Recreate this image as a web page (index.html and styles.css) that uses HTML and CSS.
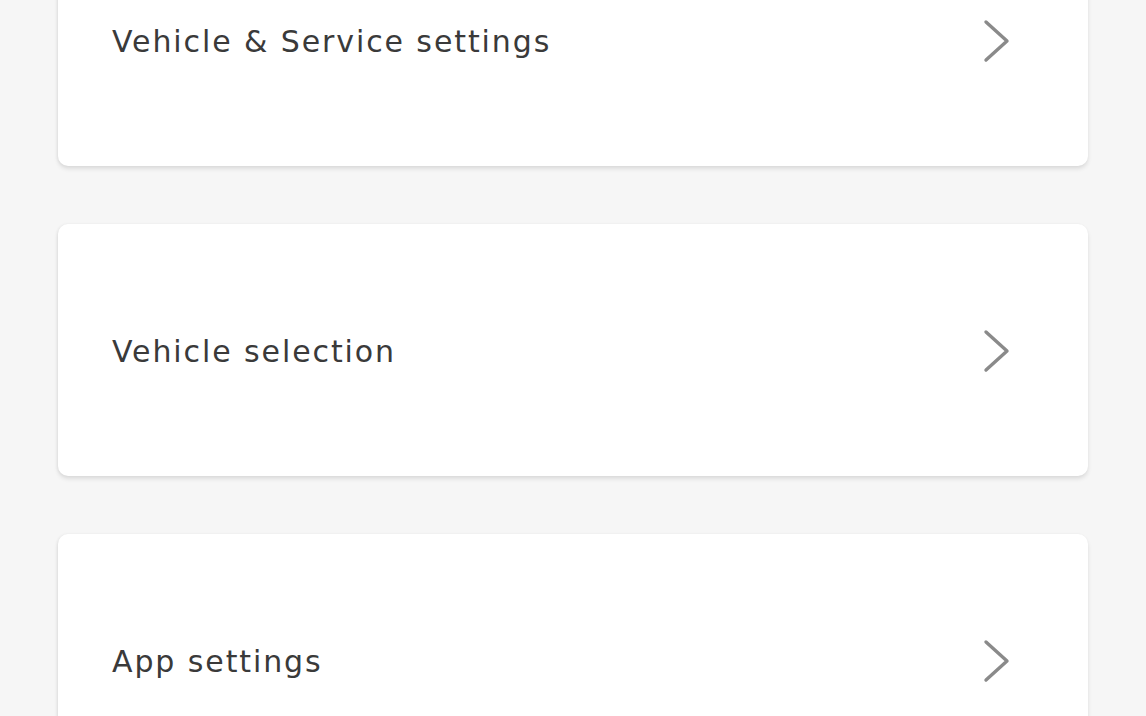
FILE: index.html
```html
<!DOCTYPE html>
<html>
<head>
<meta charset="utf-8">
<link rel="stylesheet" href="styles.css">
</head>
<body>
<div class="list">
  <div class="card">
    <span class="label">Vehicle &amp; Service settings</span>
    <svg class="chev" viewBox="0 0 30 46" width="30" height="46"><polyline points="5,4 26,23 5,42" fill="none" stroke="#8a8a8a" stroke-width="3.4" stroke-linecap="round" stroke-linejoin="round"/></svg>
  </div>
  <div class="card">
    <span class="label">Vehicle selection</span>
    <svg class="chev" viewBox="0 0 30 46" width="30" height="46"><polyline points="5,4 26,23 5,42" fill="none" stroke="#8a8a8a" stroke-width="3.4" stroke-linecap="round" stroke-linejoin="round"/></svg>
  </div>
  <div class="card">
    <span class="label">App settings</span>
    <svg class="chev" viewBox="0 0 30 46" width="30" height="46"><polyline points="5,4 26,23 5,42" fill="none" stroke="#8a8a8a" stroke-width="3.4" stroke-linecap="round" stroke-linejoin="round"/></svg>
  </div>
</div>
</body>
</html>
```

FILE: styles.css
```css
html, body {
  margin: 0;
  padding: 0;
  background: #f6f6f6;
  overflow: hidden;
}
body {
  font-family: "DejaVu Sans", "Open Sans", sans-serif;
}
.list {
  display: flex;
  flex-direction: column;
  gap: 58px;
  padding: 0 58px;
  margin-top: -86px;
}
.card {
  height: 252px;
  background: #ffffff;
  border-radius: 10px;
  box-shadow: 0 3px 4px rgba(0,0,0,0.10), -1px 0 3px rgba(0,0,0,0.05);
  display: flex;
  align-items: center;
  justify-content: space-between;
  padding: 2px 77px 0 54px;
  box-sizing: border-box;
}
.label {
  font-size: 30px;
  color: #3a3a3a;
  letter-spacing: 1.9px;
}
.chev {
  display: block;
}
```
